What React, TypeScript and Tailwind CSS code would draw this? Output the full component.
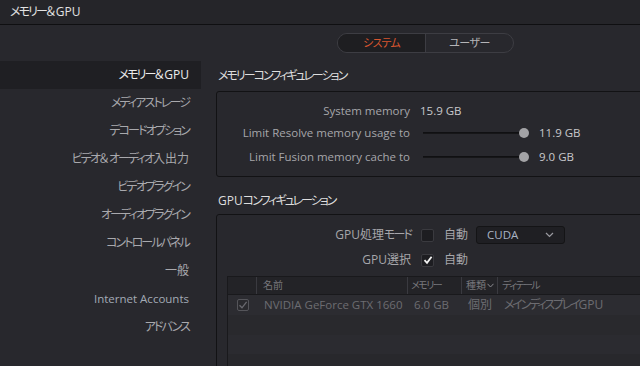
import React from "react";

const font = "[font-family:'Open_Sans','Noto_Sans_CJK_JP',sans-serif] [font-feature-settings:'palt']";

const kanaRe = /[\u3040-\u30FF\uFF0D]/;

function J({ t, k = "tracking-[-1.9px]" }: { t: string; k?: string }) {
  const runs: { s: string; kana: boolean }[] = [];
  for (const ch of t) {
    const kana = kanaRe.test(ch);
    const last = runs[runs.length - 1];
    if (last && last.kana === kana) last.s += ch;
    else runs.push({ s: ch, kana });
  }
  return (
    <>
      {runs.map((r, i) =>
        r.kana ? (
          <span key={i} className={k}>
            {r.s}
          </span>
        ) : (
          <span key={i}>{r.s}</span>
        )
      )}
    </>
  );
}

const sideItems = [
  "メモリー＆GPU",
  "メディアストレージ",
  "デコードオプション",
  "ビデオ＆オーディオ入出力",
  "ビデオプラグイン",
  "オーディオプラグイン",
  "コントロールパネル",
  "一般",
  "Internet Accounts",
  "アドバンス",
];

function Slider() {
  return (
    <div className="relative ml-[13px] h-[22px] w-[105px] flex items-center">
      <div className="h-[2px] w-[101px] bg-[#161618] border-t border-[#101012]" />
      <div className="absolute left-[96px] top-[6px] h-[10px] w-[10px] rounded-full bg-[#a3a3a6]" />
    </div>
  );
}

function Check({ checked, dim }: { checked?: boolean; dim?: boolean }) {
  return (
    <div
      className={
        dim
          ? "flex h-[12px] w-[12px] items-center justify-center rounded-[2px] border border-[#55555a] bg-[#2a2a2e]"
          : "flex h-[13px] w-[13px] items-center justify-center rounded-[2px] border border-[#3a3a3f] bg-[#1d1d21]"
      }
    >
      {checked && (
        <svg width="10" height="10" viewBox="0 0 10 10">
          <path
            d="M1.5 5.2 L4 7.8 L8.6 1.8"
            fill="none"
            stroke={dim ? "#6a6a70" : "#f2f2f2"}
            strokeWidth={dim ? 1.3 : 1.8}
          />
        </svg>
      )}
    </div>
  );
}

export default function App() {
  return (
    <div className={`relative h-[366px] w-[640px] overflow-hidden bg-[#28282d] ${font}`}>
      {/* title bar */}
      <div className="flex h-[25px] items-center border-b border-[#0f0f11] bg-[#252529] pl-[10px] text-[12px] text-[#e2e2e2]">
        <J t="メモリー＆GPU" />
      </div>

      {/* tabs */}
      <div className="flex pl-[337px] pt-[8px]">
        <div className="flex h-[20px] w-[177px] overflow-hidden rounded-full border border-[#3d3d43] text-[11px]">
          <div className="flex w-[88px] items-center justify-center border-r border-[#3d3d43] bg-[#1e1e21] text-[#d8552f]">
            <J t="システム" k="tracking-[-0.8px]" />
          </div>
          <div className="flex flex-1 items-center justify-center text-[#b5b5b8]">
            <J t="ユーザー" k="tracking-[-0.5px]" />
          </div>
        </div>
      </div>

      {/* body */}
      <div className="mt-[8px] flex">
        {/* sidebar */}
        <div className="w-[201px] shrink-0">
          {sideItems.map((t, i) => (
            <div
              key={t}
              className={
                "flex h-[28px] items-center justify-end pr-[12px] " +
                (i === 0
                  ? "bg-[#1f1f23] text-[12px] text-[#ececec]"
                  : t === "Internet Accounts"
                  ? "text-[11.5px] text-[#a3aab5]"
                  : "text-[12px] text-[#a9a9ad]")
              }
            >
              <J t={t} />
            </div>
          ))}
        </div>

        {/* main */}
        <div className="ml-[15px] w-[440px] shrink-0">
          <div className="flex h-[30px] items-center pl-[2px] text-[12px] text-[#dedede]">
            <J t="メモリーコンフィギュレーション" k="tracking-[-2px]" />
          </div>
          <div className="h-[86px] rounded-[3px] border border-[#121214] bg-[#28282d] pt-[8px] text-[11.5px]">
            <div className="flex h-[22px] items-center">
              <div className="w-[193px] text-right text-[#a6a6aa]">System memory</div>
              <div className="ml-[10px] text-[#c9c9cc]">15.9 GB</div>
            </div>
            <div className="flex h-[22px] items-center">
              <div className="w-[193px] text-right text-[#a6a6aa]">Limit Resolve memory usage to</div>
              <Slider />
              <div className="ml-[11px] text-[#c9c9cc]">11.9 GB</div>
            </div>
            <div className="mt-[2px] flex h-[22px] items-center">
              <div className="w-[193px] text-right text-[#a6a6aa]">Limit Fusion memory cache to</div>
              <Slider />
              <div className="ml-[11px] text-[#c9c9cc]">9.0 GB</div>
            </div>
          </div>

          <div className="flex h-[37px] items-center pl-[2px] pt-[10px] text-[12px] text-[#dedede]">
            <J t="GPUコンフィギュレーション" k="tracking-[-2px]" />
          </div>
          <div className="h-[200px] rounded-[3px] border border-[#121214] pt-[8px] text-[12px]">
            <div className="flex h-[24px] items-center">
              <div className="w-[194px] text-right text-[#a6a6aa]">
                <J t="GPU処理モード" />
              </div>
              <div className="ml-[10px]">
                <Check />
              </div>
              <div className="ml-[10px] w-[32px] text-[#a6a6aa]">自動</div>
              <div className="flex h-[18px] w-[89px] items-center justify-between rounded-[3px] border border-[#141416] bg-[#1f1f23] pl-[10px] pr-[10px] text-[11.5px] text-[#a9b3c4]">
                <span>CUDA</span>
                <svg width="9" height="6" viewBox="0 0 9 6">
                  <path d="M1 1 L4.5 4.5 L8 1" fill="none" stroke="#9a9aa0" strokeWidth="1.2" />
                </svg>
              </div>
            </div>
            <div className="mt-[1px] flex h-[24px] items-center">
              <div className="w-[194px] text-right text-[#a6a6aa]">GPU選択</div>
              <div className="ml-[10px]">
                <Check checked />
              </div>
              <div className="ml-[10px] text-[#a6a6aa]">自動</div>
            </div>

            {/* table */}
            <div className="ml-[10px] mt-[4px] w-[420px] border-l border-t border-[#19191c]">
              <div className="flex h-[18px] items-center border-b border-[#19191c] bg-[#232327] text-[10px] text-[#77777c]">
                <div className="h-full w-[29px] border-r border-[#3a3a40]" />
                <div className="flex h-full w-[151px] items-center border-r border-[#3a3a40] pl-[6px]">名前</div>
                <div className="flex h-full w-[54px] items-center border-r border-[#3a3a40] pl-[3px]">
                  <J t="メモリー" k="tracking-[-1.5px]" />
                </div>
                <div className="flex h-full w-[36px] items-center border-r border-[#3a3a40] pl-[4px]">
                  種類
                  <svg width="7" height="5" viewBox="0 0 7 5" className="ml-[1px]">
                    <path d="M0.5 0.8 L3.5 4 L6.5 0.8" fill="none" stroke="#8a8a90" strokeWidth="1" />
                  </svg>
                </div>
                <div className="flex h-full items-center pl-[4px]">
                  <J t="ディテール" k="tracking-[-1.5px]" />
                </div>
              </div>
              <div className="flex h-[20px] items-center bg-[#2c2c31] text-[11.5px] text-[#6c6c71]">
                <div className="flex w-[29px] justify-center pl-[1px]">
                  <Check checked dim />
                </div>
                <div className="w-[151px] pl-[7px] whitespace-nowrap">NVIDIA GeForce GTX 1660</div>
                <div className="w-[54px] pl-[6px]">6.0 GB</div>
                <div className="w-[36px] pl-[6px] text-[12px]">個別</div>
                <div className="pl-[6px] whitespace-nowrap text-[12px]">
                  <J t="メインディスプレイGPU" k="tracking-[-2.2px]" />
                </div>
              </div>
              <div className="h-[20px] bg-[#29292d]" />
              <div className="h-[19px] bg-[#2b2b30]" />
              <div className="h-[20px] bg-[#28282c]" />
            </div>
          </div>
        </div>
      </div>
    </div>
  );
}
